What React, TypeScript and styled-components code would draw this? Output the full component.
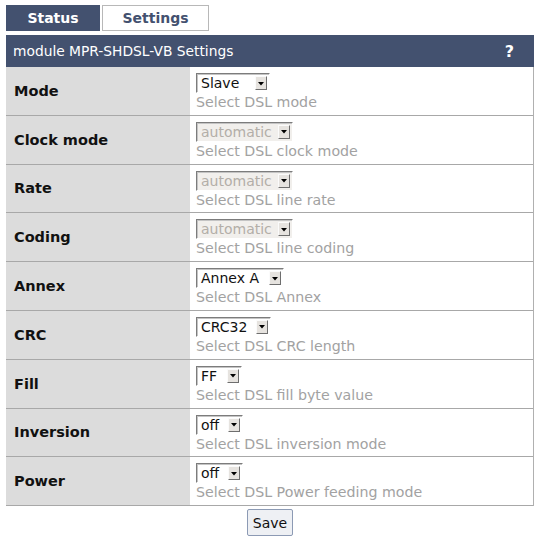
import React from 'react';
import styled, { createGlobalStyle } from 'styled-components';

const Global = createGlobalStyle`
  html, body { margin: 0; padding: 0; background: #fff; }
  body { font-family: "DejaVu Sans", Verdana, sans-serif; color: #111; }
`;

const Page = styled.div`
  padding: 5px 6px 0 6px;
`;

const Tabs = styled.div`
  display: flex;
  gap: 2px;
  height: 26px;
  margin-bottom: 4px;
`;

const Tab = styled.div<{ $active?: boolean; $w: number }>`
  box-sizing: border-box;
  width: ${(p) => p.$w}px;
  display: flex;
  align-items: center;
  justify-content: center;
  font-weight: bold;
  font-size: 14px;
  background: ${(p) => (p.$active ? '#43516f' : '#fff')};
  color: ${(p) => (p.$active ? '#fff' : '#43516f')};
  border: 1px solid ${(p) => (p.$active ? '#43516f' : '#b8b8b8')};
`;

const Header = styled.div`
  height: 32px;
  background: #43516f;
  color: #fff;
  display: flex;
  align-items: center;
  justify-content: space-between;
  padding: 0 20px 0 7px;
  font-size: 13.8px;
`;

const Help = styled.span`
  font-weight: bold;
  font-size: 16px;
`;

const Grid = styled.div`
  display: grid;
  grid-template-columns: 184px 1fr;
  border-right: 1px solid #b0b0b0;
`;

const LabelCell = styled.div`
  box-sizing: border-box;
  height: 48.8px;
  background: #dcdcdc;
  border-bottom: 1px solid #a8a8a8;
  display: flex;
  align-items: center;
  padding-left: 8px;
  font-weight: bold;
  font-size: 14.5px;
  color: #111;
`;

const ValueCell = styled.div`
  box-sizing: border-box;
  height: 48.8px;
  border-bottom: 1px solid #a8a8a8;
  padding: 6px 6px 0 6px;
  display: flex;
  flex-direction: column;
  align-items: flex-start;
`;

const SelectBox = styled.div<{ $w: number; $disabled?: boolean }>`
  box-sizing: border-box;
  width: ${(p) => p.$w}px;
  height: 20px;
  display: flex;
  align-items: center;
  justify-content: space-between;
  padding: 0 2px 0 4px;
  border-top: 1px solid #7c7c7c;
  border-left: 1px solid #7c7c7c;
  border-right: 1px solid #fff;
  border-bottom: 1px solid #fff;
  box-shadow: inset 1px 1px 0 #c4c4c4;
  background: ${(p) => (p.$disabled ? '#f1efec' : '#fff')};
  color: ${(p) => (p.$disabled ? '#b3aea8' : '#111')};
  font-size: 14px;
  line-height: 18px;
`;

const ArrowButton = styled.span`
  box-sizing: border-box;
  width: 12px;
  height: 14px;
  background: #e6e3df;
  border-top: 1px solid #fbfbfb;
  border-left: 1px solid #fbfbfb;
  border-right: 1px solid #6e6e6e;
  border-bottom: 1px solid #6e6e6e;
  display: flex;
  align-items: center;
  justify-content: center;
`;

const Hint = styled.div`
  font-size: 14.2px;
  line-height: 17px;
  color: #a2a2a2;
  margin-top: 1px;
`;

const Footer = styled.div`
  display: flex;
  justify-content: center;
  padding-top: 3px;
`;

const SaveButton = styled.button`
  box-sizing: border-box;
  width: 46px;
  height: 27px;
  padding: 0;
  background: #eef0f4;
  border: 1px solid #8c9ab4;
  border-radius: 2px;
  font-family: "DejaVu Sans", Verdana, sans-serif;
  font-size: 14px;
  color: #111;
`;

const Arrow = () => (
  <svg width="6" height="5" viewBox="0 0 6 5">
    <path d="M0 1 H6 L3 4.5 Z" fill="#000" />
  </svg>
);

type Row = { label: string; value: string; w: number; hint: string; disabled?: boolean };

const rows: Row[] = [
  { label: 'Mode', value: 'Slave', w: 74, hint: 'Select DSL mode' },
  { label: 'Clock mode', value: 'automatic', w: 97, hint: 'Select DSL clock mode', disabled: true },
  { label: 'Rate', value: 'automatic', w: 97, hint: 'Select DSL line rate', disabled: true },
  { label: 'Coding', value: 'automatic', w: 97, hint: 'Select DSL line coding', disabled: true },
  { label: 'Annex', value: 'Annex A', w: 88, hint: 'Select DSL Annex' },
  { label: 'CRC', value: 'CRC32', w: 75, hint: 'Select DSL CRC length' },
  { label: 'Fill', value: 'FF', w: 46, hint: 'Select DSL fill byte value' },
  { label: 'Inversion', value: 'off', w: 47, hint: 'Select DSL inversion mode' },
  { label: 'Power', value: 'off', w: 47, hint: 'Select DSL Power feeding mode' },
];

export default function App() {
  return (
    <>
      <Global />
      <Page>
        <Tabs>
          <Tab $active $w={94}>Status</Tab>
          <Tab $w={107}>Settings</Tab>
        </Tabs>
        <Header>
          <span>module MPR-SHDSL-VB Settings</span>
          <Help>?</Help>
        </Header>
        <Grid>
          {rows.map((r) => (
            <React.Fragment key={r.label}>
              <LabelCell>{r.label}</LabelCell>
              <ValueCell>
                <SelectBox $w={r.w} $disabled={r.disabled}>
                  <span>{r.value}</span>
                  <ArrowButton>
                    <Arrow />
                  </ArrowButton>
                </SelectBox>
                <Hint>{r.hint}</Hint>
              </ValueCell>
            </React.Fragment>
          ))}
        </Grid>
        <Footer>
          <SaveButton>Save</SaveButton>
        </Footer>
      </Page>
    </>
  );
}
